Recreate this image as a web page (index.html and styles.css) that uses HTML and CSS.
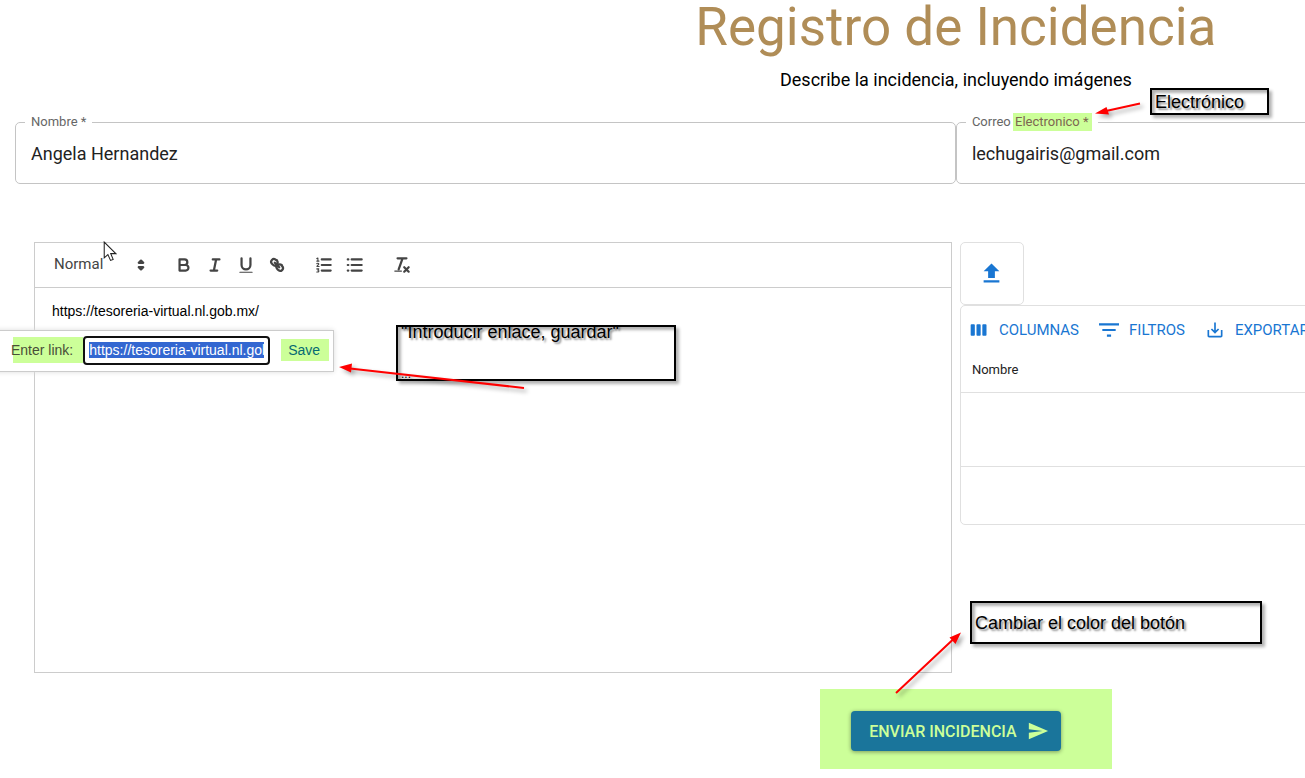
FILE: index.html
```html
<!DOCTYPE html>
<html lang="es">
<head>
<meta charset="utf-8">
<title>Registro de Incidencia</title>
<link rel="stylesheet" href="styles.css">
</head>
<body>
<div class="viewport">
<main class="page">
  <header class="header">
    <h1 class="title">Registro de Incidencia</h1>
    <p class="subtitle">Describe la incidencia, incluyendo imágenes</p>
  </header>

  <form class="form">
    <div class="fields">
      <fieldset class="field">
        <legend class="legend"><label for="nombre">Nombre *</label></legend>
        <input class="field-input" id="nombre" type="text" value="Angela Hernandez">
      </fieldset>
      <fieldset class="field">
        <legend class="legend"><label for="correo">Correo <mark class="mark">Electronico *</mark></label></legend>
        <input class="field-input" id="correo" type="email" value="lechugairis@gmail.com">
      </fieldset>
    </div>

    <div class="columns">
      <section class="editor">
        <div class="toolbar">
          <div class="picker">
            <select class="picker-select" aria-label="Formato"><option>Normal</option></select>
            <svg class="picker-caret" viewBox="0 0 18 18"><path d="M7 11 9 13 11 11zM7 7 9 5 11 7z"/></svg>
          </div>
          <div class="tools">
            <button type="button" class="tool" aria-label="Negrita"><svg viewBox="0 0 18 18"><path d="M5 4H9.5A2.5 2.5 0 0 1 12 6.500A2.500 2.500 0 0 1 9.500 9H5zM5 9H10.500A2.500 2.500 0 0 1 13 11.500A2.500 2.500 0 0 1 10.500 14H5z"/></svg></button>
            <button type="button" class="tool" aria-label="Cursiva"><svg viewBox="0 0 18 18"><path d="M7 4H13M5 14H11M8 14 10 4"/></svg></button>
            <button type="button" class="tool" aria-label="Subrayado"><svg viewBox="0 0 18 18"><path d="M5 3V9A4 4 0 0 0 9 13 4 4 0 0 0 13 9V3"/><rect class="solid" x="3" y="15" width="12" height="1" rx=".5"/></svg></button>
            <button type="button" class="tool" aria-label="Enlace"><svg viewBox="0 0 18 18"><path d="M7 7 11 11M8.900 4.577A3.476 3.476 0 0 1 9.360 7.679 3.476 3.476 0 0 1 9.100 9.100C8 10 6.400 9.800 5.100 8.500L4.300 7.700A2.500 2.500 0 0 1 7.700 4.100L8.900 5.100M13.423 9.100A3.476 3.476 0 0 0 10.321 8.640C9.700 8.600 8.900 8.900 8.640 9.500 8.200 10.500 8.200 11.700 9.500 12.900L10.300 13.700A2.500 2.500 0 0 0 13.900 10.300L13 9.200"/></svg></button>
          </div>
          <div class="tools">
            <button type="button" class="tool" aria-label="Lista numerada"><svg viewBox="0 0 18 18"><path d="M7 4H15M7 9H15M7 14H15"/><path class="fine" d="M2.500 5.500H4.500M3.500 5.500V2.700L2.500 3.200M2.500 7.800C3 7.200 4.400 7.400 4.300 8.300L2.600 10.300H4.600M2.500 12.500H4.300L3.500 13.700C5 13.700 4.700 15.500 2.500 15.300"/></svg></button>
            <button type="button" class="tool" aria-label="Lista con viñetas"><svg viewBox="0 0 18 18"><path d="M6 4H15M6 9H15M6 14H15"/><path d="M2.500 4H3M2.500 9H3M2.500 14H3"/></svg></button>
          </div>
          <div class="tools">
            <button type="button" class="tool" aria-label="Quitar formato"><svg viewBox="0 0 18 18"><path d="M5 3H13M6 13 9.500 3M11 11 15 15M15 11 11 15"/><rect class="solid" x="2" y="14" width="7" height="1" rx=".5"/></svg></button>
          </div>
        </div>
        <div class="editor-body">
          <p class="editor-text">https://tesoreria-virtual.nl.gob.mx/</p>
          <div class="link-tip">
            <label class="link-label" for="enlace">Enter link:</label>
            <input class="link-input" id="enlace" type="text" value="https://tesoreria-virtual.nl.gob.mx/">
            <button type="button" class="link-save">Save</button>
          </div>
        </div>
      </section>

      <section class="files">
        <button type="button" class="upload" aria-label="Subir archivo"><svg viewBox="0 0 24 24"><path d="M5 20h14v-2H5v2zM5 10h4v6h6v-6h4l-7-7-7 7z"/></svg></button>
        <div class="grid">
          <div class="grid-tools">
            <button type="button" class="grid-tool"><svg viewBox="0 0 24 24"><path d="M6 5H3c-.6 0-1 .4-1 1v12c0 .6.4 1 1 1h3c.6 0 1-.4 1-1V6c0-.6-.4-1-1-1zm14 0h-3c-.6 0-1 .4-1 1v12c0 .6.4 1 1 1h3c.6 0 1-.4 1-1V6c0-.6-.4-1-1-1zm-7 0h-3c-.6 0-1 .4-1 1v12c0 .6.4 1 1 1h3c.6 0 1-.4 1-1V6c0-.6-.4-1-1-1z"/></svg>COLUMNAS</button>
            <button type="button" class="grid-tool"><svg viewBox="0 0 24 24"><path d="M9.500 20h5v-2.500h-5V20zM0 4v2.500h24V4H0zm4 9.200h16v-2.400H4v2.400z"/></svg>FILTROS</button>
            <button type="button" class="grid-tool"><svg viewBox="0 0 24 24"><path d="M19 12v7H5v-7H3v7c0 1.100.900 2 2 2h14c1.100 0 2-.900 2-2v-7h-2zm-6 .670 2.590-2.580L17 11.500l-5 5-5-5 1.410-1.410L11 12.670V3h2v9.670z"/></svg>EXPORTAR</button>
          </div>
          <table class="table">
            <thead><tr><th>Nombre</th></tr></thead>
            <tbody><tr><td></td></tr></tbody>
          </table>
          <div class="grid-footer"></div>
        </div>
      </section>
    </div>

    <div class="actions">
      <div class="button-mark"></div>
      <button type="submit" class="send">ENVIAR INCIDENCIA<svg viewBox="0 0 24 24"><path d="M2.010 21 23 12 2.010 3 2 10l15 2-15 2z"/></svg></button>
    </div>
  </form>

  <p class="note note-mail">Electrónico</p>
  <div class="note note-link"><span>"Introducir enlace, guardar"</span><small>...</small></div>
  <p class="note note-color">Cambiar el color del botón</p>
  <svg class="arrows" viewBox="0 0 1305 778" aria-hidden="true">
    <path class="line" d="M1140 103.500 1106 111M524 388 350 368.500M896 693 953 639.500"/>
    <path class="head" d="M1095 113.500 1106.500 107 1109 114.500zM339 367 352 363.500 351 372.500zM961 632.500 955.500 644 949.500 637.500z"/>
  </svg>
  <svg class="cursor" viewBox="0 0 13 20" aria-hidden="true"><path d="M1 1V16L4.500 13 7 18.500 9.500 17.500 7.200 12H12z"/></svg>
</main>
</div>
<script src="script.js"></script>
</body>
</html>
```
FILE: styles.css
```css
* { box-sizing: border-box; }
body { margin: 0; background: #fff; color: #000; font-family: Roboto, sans-serif; font-size: 18px; }
p, h1 { margin: 0; }
button, input, select { font: inherit; }
button { padding: 0; border: 0; background: none; cursor: pointer; }
.viewport { overflow: hidden; min-height: 100vh; }
/* The form is wider than the window; the right side runs out of view. */
.page { position: relative; width: 146.5vw; padding: 0 15px 27px; }
.header { text-align: center; }
.title { font-size: 53px; font-weight: 400; line-height: 54px; color: #b08d57; }
.subtitle { margin-top: 12px; line-height: 28px; }

.fields { display: grid; grid-template-columns: 1fr 1fr; margin-top: 19px; }
.field { min-width: 0; margin: 0; padding: 0 9px; border: 1px solid #c4c4c4; border-radius: 5px; }
.legend { padding: 0 6px; font-size: 13px; line-height: 18px; color: #666; }
.legend label { display: block; }
.mark { display: inline-block; margin-left: -1px; padding: 0 3px 0 2px; background: #cf9; color: #7c6650; }
.field-input { display: block; width: 100%; height: 44px; margin-bottom: 8px; padding: 0 6px; border: 0; outline: 0; background: none; color: #222; }

.columns { display: grid; grid-template-columns: 1fr 1fr; gap: 8px; margin-top: 58px; padding-left: 19px; padding-right: 19px; }
.editor { display: flex; flex-direction: column; border: 1px solid #ccc; }
.toolbar { display: flex; align-items: center; gap: 16px; height: 45px; padding-left: 19px; border-bottom: 1px solid #ccc; }
.picker { position: relative; display: flex; align-items: center; width: 98px; }
.picker-select { width: 100%; padding: 0 0 2px; border: 0; appearance: none; background: none; color: #444; font-size: 15px; }
.picker-caret { position: absolute; right: 1px; width: 20px; height: 20px; pointer-events: none; }
.picker-caret path { fill: #444; stroke: #444; stroke-width: 2; stroke-linejoin: round; }
.tools { display: flex; }
.tool { display: flex; justify-content: center; width: 31px; }
.tool svg { width: 20px; height: 20px; }
.tool path { fill: none; stroke: #444; stroke-width: 2; stroke-linecap: round; stroke-linejoin: round; }
.tool .fine { stroke-width: 1; }
.solid { fill: #444; }
.editor-body { position: relative; height: 384px; padding: 14px 17px; font-family: "Liberation Sans", Arial, sans-serif; font-size: 14px; }
.editor-text { line-height: 18px; }
.link-tip { position: absolute; top: 42px; left: -49px; display: flex; align-items: center; height: 42px; padding: 0 4px 2px 24px; border: 1px solid #ccc; background: #fff; box-shadow: 0 0 5px #ddd; color: #444; }
.link-label { height: 26px; padding-right: 10px; background: linear-gradient(to right, transparent 2px, #cf9 2px); line-height: 26px; color: #484e38; }
.link-input { width: 187px; height: 29px; padding: 0 4px; border: 2px solid #111; border-radius: 4px; outline: 0; color: #000; }
.link-input::selection { background: #3367d1; color: #fff; }
.link-save { height: 22px; margin-left: 11px; padding: 0 9px 0 7px; background: #cf9; color: #056a72; }

.files { min-width: 0; }
.upload { display: flex; align-items: center; justify-content: center; width: 64px; height: 63px; border: 1px solid #e0e0e0; border-radius: 5px; }
.upload svg { width: 27px; height: 27px; fill: #1976d2; }
.grid { border: 1px solid #e0e0e0; border-radius: 5px; }
.grid-tools { display: flex; align-items: center; gap: 20px; height: 42px; padding: 6px 8px 0; }
.grid-tool { display: flex; align-items: center; gap: 10px; color: #1976d2; font-size: 15px; }
.grid-tool svg { width: 20px; height: 20px; fill: currentColor; }
.table { width: 100%; border-collapse: collapse; }
.table th { height: 44px; padding: 0 11px; border-bottom: 1px solid #e0e0e0; text-align: left; font-size: 13px; font-weight: 400; color: #222; }
.table td { height: 74px; padding: 0; border-bottom: 1px solid #e0e0e0; }
.grid-footer { height: 57px; }

.actions { position: relative; display: flex; justify-content: center; margin-top: 38px; }
.button-mark { position: absolute; top: -22px; left: calc(50% - 136px); width: 292px; height: 80px; background: #cf9; }
.send { position: relative; display: flex; align-items: center; gap: 10px; height: 40px; padding: 0 12px 0 18px; border-radius: 4px; background: #1a759b; box-shadow: 0 1px 4px rgba(0, 0, 0, .4); color: #cf9; font-size: 16px; font-weight: 500; }
.send svg { width: 22px; height: 22px; fill: currentColor; }

/* Review notes lie over the form. */
.note { position: absolute; overflow: hidden; border: 2px solid #000; box-shadow: 3px 3px 3px rgba(0, 0, 0, .3), inset 3px 3px 3px rgba(0, 0, 0, .3); font-family: "Liberation Sans", Arial, sans-serif; font-size: 18px; text-shadow: 2px 2px 2px rgba(0, 0, 0, .45); white-space: nowrap; padding: 0 3px; }
.note-mail { top: 88px; left: 1150px; width: 119px; height: 27px; line-height: 24px; }
.note-link { top: 325px; left: 396px; width: 280px; height: 56px; line-height: 10px; }
.note-link small { display: block; margin-top: 32px; font-size: 12px; }
.note-color { top: 601px; left: 970px; width: 292px; height: 43px; line-height: 40px; }
.arrows { position: absolute; top: 0; left: 0; width: 1305px; height: 778px; pointer-events: none; filter: drop-shadow(3px 3px 2px rgba(0, 0, 0, .35)); }
.line { fill: none; stroke: #f00; stroke-width: 2; }
.head { fill: #f00; }
.cursor { position: absolute; top: 241px; left: 103px; width: 14px; height: 21px; fill: #fff; stroke: #222; stroke-width: 1; }
```
FILE: script.js
```js
const link = document.getElementById('enlace');
link.focus({ preventScroll: true });
link.select();
```
